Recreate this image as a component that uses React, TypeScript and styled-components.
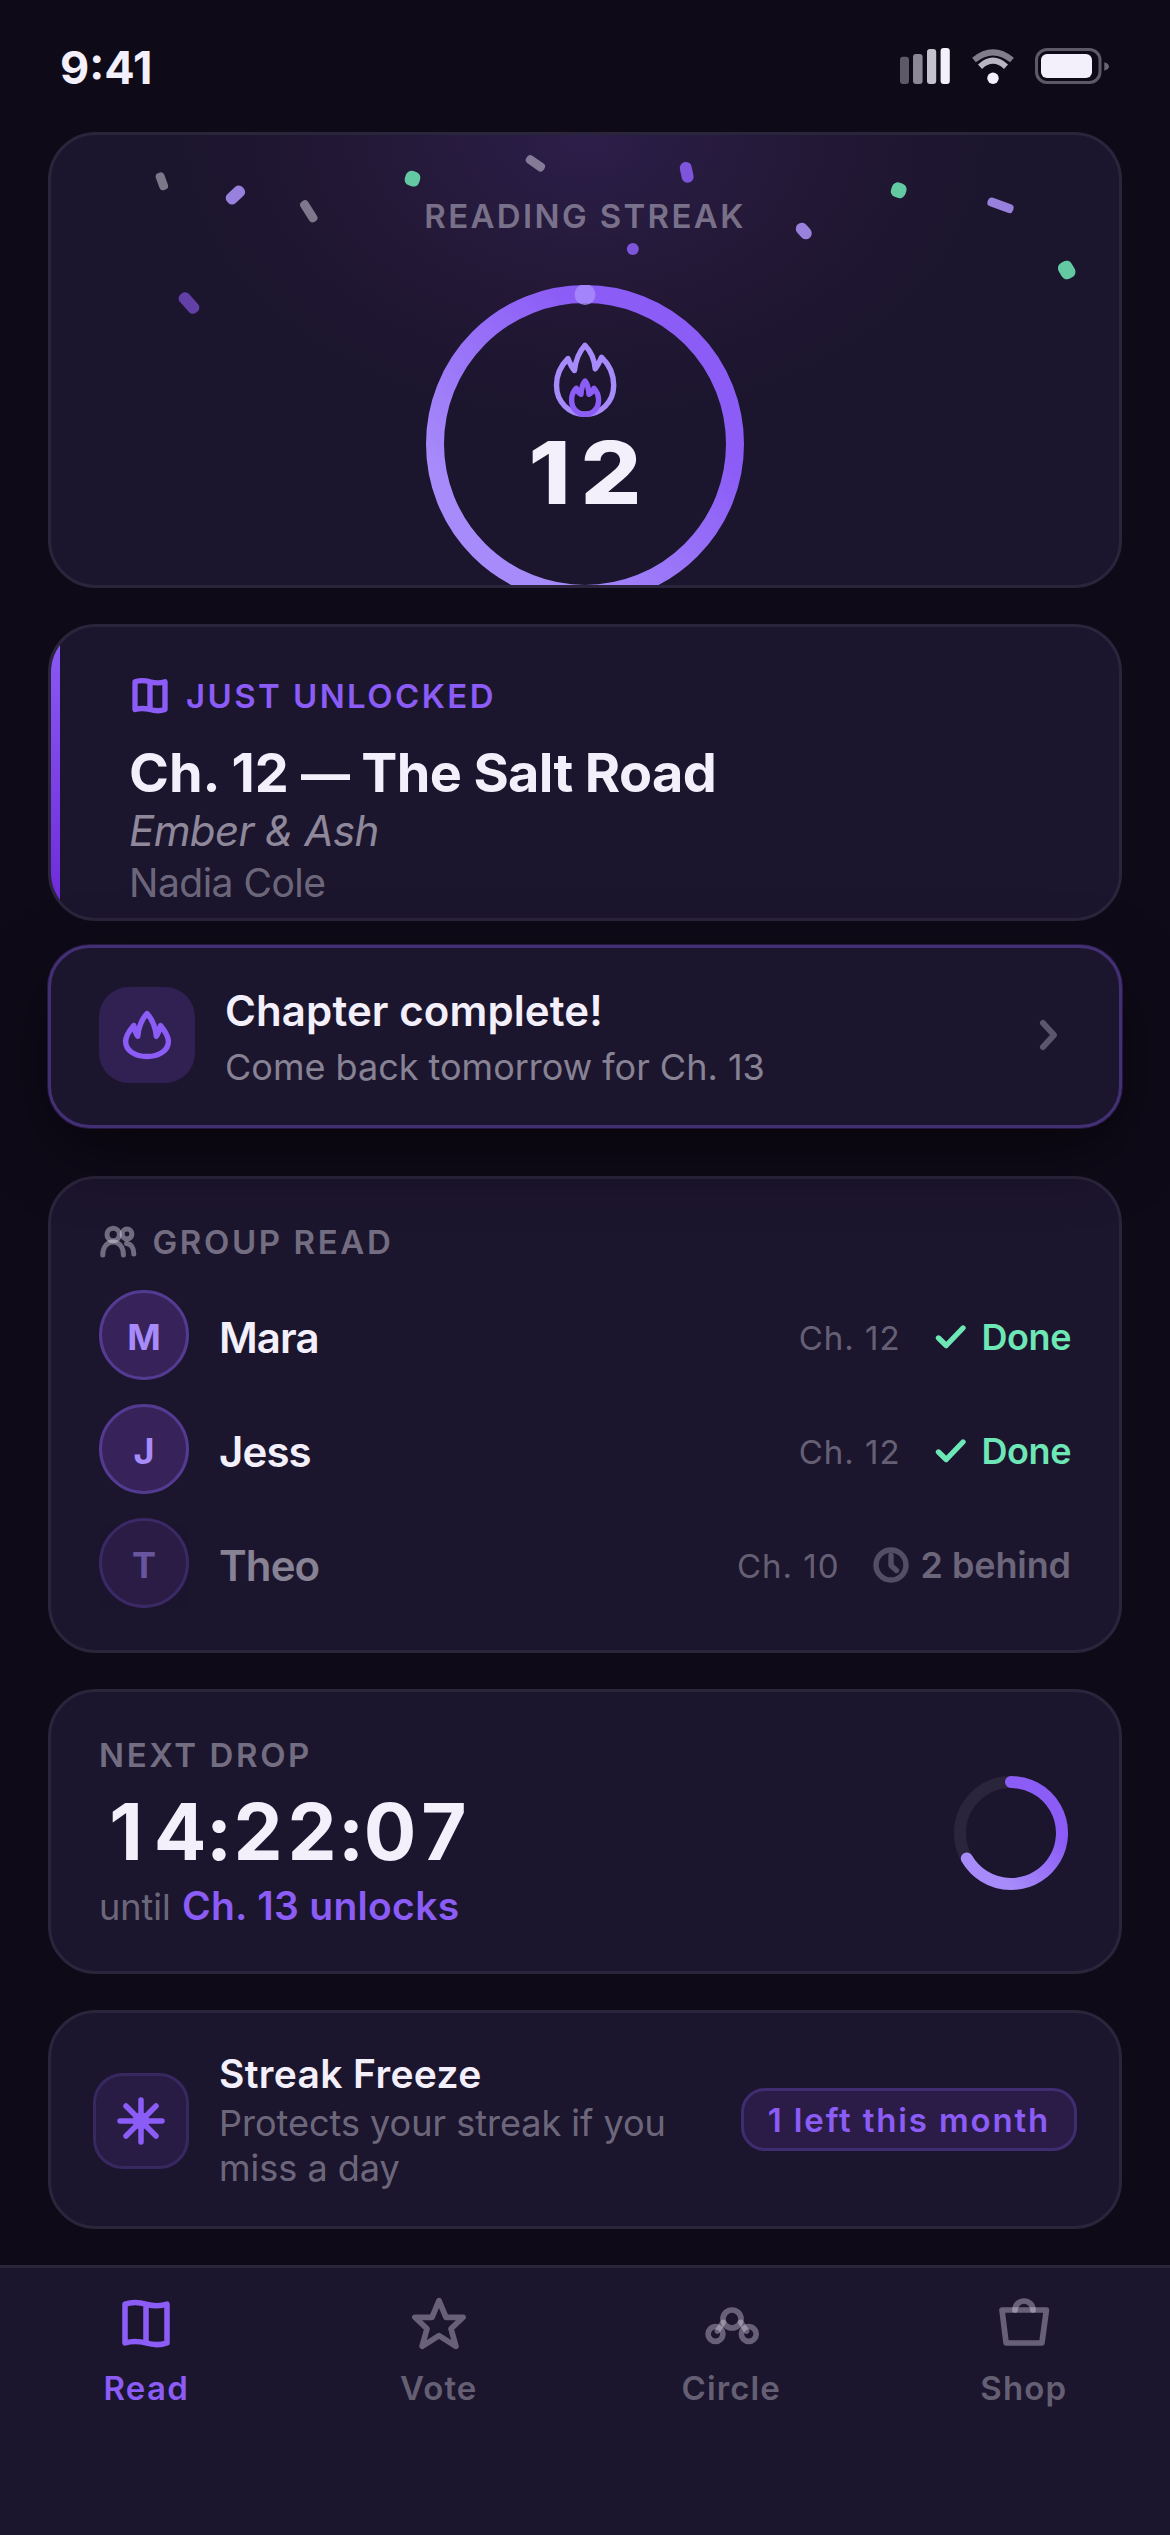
import React from "react";
import styled, { createGlobalStyle } from "styled-components";

const c = {
  page: "#0f0a18",
  card: "#1c152e",
  line: "#2b253c",
  text: "#f3effb",
  violet: "#8b5cf6",
  lilac: "#a78bfa",
  mint: "#6ee7b7",
  mute: (a: number) => `rgba(243, 239, 251, ${a})`,
};

const Global = createGlobalStyle`
  * { box-sizing: border-box; }
  html, body { margin: 0; padding: 0; background: ${c.page}; }
  body {
    font-family: Inter, "Liberation Sans", sans-serif;
    color: ${c.text};
    -webkit-font-smoothing: antialiased;
  }
  svg { display: block; flex: none; }
`;

const Screen = styled.div`
  width: 1170px;
  height: 2535px;
  display: flex;
  flex-direction: column;
  background: ${c.page};
  overflow: hidden;
`;

const StatusBar = styled.header`
  height: 132px;
  padding: 0 61px 0 60px;
  display: flex;
  justify-content: space-between;
  align-items: center;
`;

const Clock = styled.div`
  font-size: 45px;
  line-height: 54px;
  font-weight: 700;
  padding-top: 4px;
`;

const Feed = styled.main`
  flex: 1;
  padding: 0 48px;
  display: flex;
  flex-direction: column;
`;

const Card = styled.section<{ $h: number; $mt?: number }>`
  position: relative;
  flex: none;
  height: ${(p) => p.$h}px;
  margin-top: ${(p) => p.$mt ?? 0}px;
  background: ${c.card};
  border: 3px solid ${c.line};
  border-radius: 48px;
  overflow: hidden;
`;

const StreakCard = styled(Card)`
  display: flex;
  flex-direction: column;
  align-items: center;
  padding-top: 61px;
  background: radial-gradient(ellipse 400px 280px at 50% 0%, #2c1e4a 0%, #241938 50%, ${c.card} 100%);
`;

const ConfettiLayer = styled.svg`
  position: absolute;
  left: 0;
  top: 0;
`;

const Label = styled.div<{ $tone?: string; $ls?: number }>`
  position: relative;
  display: flex;
  align-items: center;
  font-size: 33px;
  line-height: 40px;
  font-weight: 600;
  letter-spacing: ${(p) => p.$ls ?? 2.35}px;
  text-transform: uppercase;
  color: ${(p) => p.$tone ?? c.mute(0.42)};
`;

const RingStack = styled.div`
  display: grid;
  justify-items: center;
  margin-top: 49px;
  > * { grid-area: 1 / 1; }
`;

const RingContent = styled.div`
  display: flex;
  flex-direction: column;
  align-items: center;
  padding-top: 57px;
`;

const StreakCount = styled.div`
  margin-top: 11px;
  margin-right: -10px;
  font-size: 87px;
  line-height: 90px;
  font-weight: 800;
  letter-spacing: 9px;
  transform: scaleX(1.1);
`;

const ChapterCard = styled(Card)`
  display: flex;
  padding-top: 48px;
  &::before {
    content: "";
    position: absolute;
    left: 0;
    top: 0;
    bottom: 0;
    width: 9px;
    background: linear-gradient(180deg, ${c.violet}, #6d28d9);
  }
`;

const ChapterBody = styled.div`
  padding-left: 78px;
`;

const LabelIcon = styled.span<{ $gap: number }>`
  margin-right: ${(p) => p.$gap}px;
`;

const ChapterTitle = styled.h1`
  margin: 23px 0 0;
  font-size: 54px;
  line-height: 66px;
  font-weight: 700;
  letter-spacing: -0.65px;
`;

const ChapterNumber = styled.span`
  letter-spacing: -0.05px;
`;

const Dash = styled.span`
  font-size: 49px;
  line-height: 1;
`;

const BookName = styled.div`
  font-size: 42px;
  line-height: 50px;
  font-style: italic;
  letter-spacing: -0.6px;
  color: ${c.mute(0.55)};
`;

const Author = styled.div`
  margin-top: 2px;
  font-size: 39px;
  line-height: 50px;
  letter-spacing: -0.5px;
  color: ${c.mute(0.4)};
`;

const Toast = styled.section`
  position: relative;
  z-index: 2;
  flex: none;
  height: 183px;
  margin-top: 24px;
  padding: 0 55px 3px 48px;
  display: flex;
  align-items: center;
  background: ${c.card};
  border: 3px solid #432f74;
  border-radius: 42px;
  box-shadow: 0 0 0 1px rgba(139, 92, 246, 0.2), 0 24px 72px rgba(0, 0, 0, 0.45);
`;

const Tile = styled.div<{ $outlined?: boolean }>`
  width: 96px;
  height: 96px;
  flex: none;
  display: flex;
  align-items: center;
  justify-content: center;
  margin-right: 30px;
  border-radius: 30px;
  background: ${(p) => (p.$outlined ? "#281c45" : "#302152")};
  border: ${(p) => (p.$outlined ? "3px solid #382860" : "none")};
`;

const Grow = styled.div`
  flex: 1;
  min-width: 0;
`;

const ToastText = styled(Grow)`
  padding-top: 4px;
`;

const ToastTitle = styled.div`
  font-size: 42px;
  line-height: 51px;
  font-weight: 600;
  letter-spacing: 0.1px;
`;

const ToastSub = styled.div`
  margin-top: 9px;
  font-size: 36px;
  line-height: 45px;
  color: ${c.mute(0.5)};
`;

const GroupCard = styled(Card)`
  padding: 43px 48px 0;
`;

const Members = styled.div`
  display: flex;
  flex-direction: column;
  gap: 24px;
  margin-top: 28px;
`;

const Member = styled.div`
  display: flex;
  align-items: center;
  height: 90px;
`;

const Avatar = styled.div<{ $dim?: boolean }>`
  width: 90px;
  height: 90px;
  border-radius: 50%;
  border: 3px solid #543b92;
  background: #372359;
  color: ${c.lilac};
  display: flex;
  align-items: center;
  justify-content: center;
  padding-top: 4px;
  font-size: 36px;
  font-weight: 700;
  opacity: ${(p) => (p.$dim ? 0.55 : 1)};
`;

const MemberName = styled.div<{ $dim?: boolean }>`
  flex: 1;
  padding: 5px 0 0 30px;
  font-size: 42px;
  font-weight: 560;
  letter-spacing: -0.9px;
  color: ${(p) => (p.$dim ? c.mute(0.5) : c.text)};
`;

const MemberChapter = styled.div`
  padding-top: 5px;
  font-size: 33px;
  color: ${c.mute(0.36)};
  letter-spacing: 0.99px;
`;

const MemberStatus = styled.div<{ $done?: boolean }>`
  display: flex;
  align-items: center;
  padding-top: 4px;
  margin-left: 33px;
  gap: 12px;
  font-size: 36px;
  font-weight: 600;
  letter-spacing: ${(p) => (p.$done ? -0.45 : -0.1)}px;
  color: ${(p) => (p.$done ? c.mint : c.mute(0.38))};
`;

const DropCard = styled(Card)`
  display: flex;
  padding: 43px 51px 0 48px;
`;

const Countdown = styled.div`
  display: flex;
  margin-top: 12px;
  font-size: 78px;
  line-height: 90px;
  font-weight: 700;
`;

const Digit = styled.span<{ $sep?: boolean }>`
  display: flex;
  justify-content: center;
  width: ${(p) => (p.$sep ? 24 : 54)}px;
`;

const Until = styled.div`
  margin-top: 5px;
  font-size: 36px;
  line-height: 48px;
  color: ${c.mute(0.4)};
  strong {
    margin-left: 1px;
    font-size: 39px;
    font-weight: 600;
    letter-spacing: 0.3px;
    color: ${c.violet};
  }
`;

const DropRing = styled.div`
  padding-top: 41px;
`;

const FreezeCard = styled(Card)`
  display: flex;
  align-items: center;
  padding: 3px 42px 0;
`;

const FreezeText = styled(Grow)`
  padding-bottom: 1px;
`;

const FreezeTitle = styled.div`
  font-size: 39px;
  line-height: 48px;
  font-weight: 600;
  letter-spacing: 0.35px;
`;

const FreezeSub = styled.div`
  margin-top: 3px;
  width: 480px;
  font-size: 36px;
  line-height: 45px;
  color: ${c.mute(0.4)};
`;

const Pill = styled.div`
  flex: none;
  width: 336px;
  height: 63px;
  margin-bottom: 3px;
  display: flex;
  align-items: center;
  justify-content: center;
  border: 3px solid #402c70;
  border-radius: 24px;
  background: #2b1c47;
  color: ${c.violet};
  font-size: 33px;
  font-weight: 600;
  letter-spacing: 1.85px;
  white-space: nowrap;
`;

const TabBar = styled.nav`
  height: 270px;
  flex: none;
  border-top: 3px solid ${c.line};
  background: ${c.card};
  display: grid;
  grid-template-columns: repeat(4, 1fr);
  padding-top: 20px;
`;

const Tab = styled.div<{ $active?: boolean }>`
  display: flex;
  flex-direction: column;
  align-items: center;
  gap: 8px;
  font-size: 33px;
  line-height: 40px;
  font-weight: 600;
  letter-spacing: ${(p) => (p.$active ? 1.3 : 1.1)}px;
  color: ${(p) => (p.$active ? c.violet : c.mute(0.35))};
`;

type Piece = { x: number; y: number; w: number; h: number; r: number; rx: number; fill: string };
const gray = "rgba(243,239,251,.45)";
const lav = "#9880dd";
const green = "#62c9a2";
const pieces: Piece[] = [
  { x: 161.9, y: 181.3, w: 9, h: 18, r: -20, rx: 4, fill: gray },
  { x: 235.4, y: 195, w: 12, h: 21, r: 47, rx: 5, fill: lav },
  { x: 308.8, y: 211.3, w: 9, h: 24, r: -32, rx: 4, fill: gray },
  { x: 412.5, y: 178.7, w: 15, h: 15, r: 18, rx: 6, fill: green },
  { x: 535.4, y: 163.3, w: 9, h: 21, r: -55, rx: 4, fill: gray },
  { x: 189, y: 303, w: 12, h: 24, r: -42, rx: 5, fill: "#6240a8" },
  { x: 686.7, y: 172.3, w: 12, h: 21, r: -12, rx: 6, fill: "#7c55dc" },
  { x: 632.8, y: 249, w: 12, h: 12, r: 0, rx: 6, fill: "#7c55dc" },
  { x: 803.8, y: 231, w: 12, h: 18, r: -42, rx: 6, fill: lav },
  { x: 898.7, y: 190.3, w: 15, h: 15, r: 20, rx: 6, fill: green },
  { x: 1000.5, y: 205.3, w: 27, h: 9, r: 20, rx: 4, fill: lav },
  { x: 1066.7, y: 270, w: 15, h: 18, r: -30, rx: 6, fill: green },
];

const Confetti = () => (
  <ConfettiLayer width="1068" height="450" viewBox="51 135 1068 450">
    {pieces.map((p, i) => (
      <rect
        key={i}
        x={p.x - p.w / 2}
        y={p.y - p.h / 2}
        width={p.w}
        height={p.h}
        rx={p.rx}
        fill={p.fill}
        transform={`rotate(${p.r} ${p.x} ${p.y})`}
      />
    ))}
  </ConfettiLayer>
);

const StatusIcons = () => (
  <svg width="210" height="42" viewBox="899 45 210 42">
    <rect x="900" y="56.700" width="9" height="27.300" rx="3" fill={c.mute(0.35)} />
    <rect x="913" y="54" width="9.600" height="30" rx="3" fill={c.mute(0.55)} />
    <rect x="927" y="49" width="9.200" height="35" rx="3" fill={c.mute(0.8)} />
    <rect x="940.600" y="48" width="9.200" height="36" rx="3" fill={c.text} />
    <g fill="none" strokeWidth="6">
      <path d="M974 60 Q993 44.600 1012 60" stroke={c.mute(0.5)} />
      <path d="M980 66.700 Q993 54.700 1006 66.700" stroke={c.mute(0.75)} />
    </g>
    <circle cx="993" cy="78.200" r="5.700" fill={c.text} />
    <rect x="1036.500" y="49.500" width="63.500" height="33" rx="10.500" fill="none" stroke={c.mute(0.35)} strokeWidth="3" />
    <rect x="1041" y="54" width="51" height="24" rx="6" fill={c.text} />
    <path d="M1104.300 62.300 q4.700 1.500 4.700 4.200 t-4.700 4.200z" fill={c.mute(0.4)} />
  </svg>
);

const Book = ({ size, span, stroke }: { size: number; span: number; stroke: number }) => (
  <svg
    width={size}
    height={size}
    viewBox={`${-span / 2} ${-span / 2} ${span} ${span}`}
    fill="none"
    stroke={c.violet}
    strokeWidth={stroke}
    strokeLinejoin="round"
    strokeLinecap="round"
  >
    <path d="M-7 -6.600 C-5 -7.300 -2.300 -7.300 0 -6.600 C2.300 -6 5 -6 7 -6.600 V6.300 C5 7 2.300 7 0 6.300 C-2.300 5.700 -5 5.700 -7 6.300 Z M0 -6.600 V6.300" />
  </svg>
);

const BigRing = () => (
  <svg width="320" height="300" viewBox="425 285 320 300" fill="none">
    <defs>
      <linearGradient id="ring" x1="0.2" y1="0.8" x2="0.72" y2="0.28">
        <stop offset="0" stopColor={c.lilac} />
        <stop offset="1" stopColor={c.violet} />
      </linearGradient>
    </defs>
    <circle cx="585" cy="444" r="150" stroke="url(#ring)" strokeWidth="18" />
    <circle cx="585" cy="294.500" r="10.500" fill={c.lilac} fillOpacity="0.85" />
  </svg>
);

const StreakFlame = () => (
  <svg width="66" height="75" viewBox="552 342 66 75" fill="none" strokeWidth="5.400" strokeLinejoin="round" strokeLinecap="round">
    <path
      stroke={c.lilac}
      d="M585 345.300 C579 352 575.500 361 574.500 370.500 C572 368 569.500 362.500 568 358.500 C560.500 366 556.500 375 556.500 385.300 C556.500 402 569 414.300 585 414.300 C601 414.300 613.700 402 613.700 385.300 C613.700 374 608.500 364 601.500 357.300 C600 361 597.500 366 595.200 368.800 C594.500 360 591 351.500 585 345.300 Z"
    />
    <path
      stroke={c.violet}
      d="M585 381 C582.500 384 581.300 389 581 394.300 C578.500 393 577 390.500 576.300 388.300 C573 391.500 571.600 396 571.600 400 C571.600 408.500 577.500 414.300 585 414.300 C592.500 414.300 598.600 408.500 598.600 400 C598.600 396 597 391.500 594 388.300 C593 390.500 591.500 393 589 394.300 C588.700 389 587.500 384 585 381 Z"
    />
  </svg>
);

const SmallFlame = () => (
  <svg width="54" height="54" viewBox="120 1008 54 54" fill="none" stroke={c.violet} strokeWidth="5.400" strokeLinejoin="round" strokeLinecap="round">
    <path d="M147 1013.500 C141.500 1019.500 138.500 1028 137.800 1036.300 C135.800 1033.500 134.500 1029.500 133.800 1025.500 C129 1031 125.600 1036.500 125.600 1041.500 C125.600 1050.500 135 1056.500 147 1056.500 C159 1056.500 168.400 1050.500 168.400 1041.500 C168.400 1036.500 165 1031 160.500 1025.500 C159.500 1029.500 158.300 1033.500 156.300 1036.300 C155.500 1028 152.500 1019.500 147 1013.500 Z" />
  </svg>
);

const People = () => (
  <svg width="38" height="36" viewBox="100 1223.500 38 36" fill="none" stroke={c.mute(0.4)} strokeWidth="5" strokeLinecap="round">
    <circle cx="114.200" cy="1234" r="6.200" />
    <circle cx="128" cy="1233.500" r="4.900" />
    <path d="M103.800 1254.500 C103.800 1237 124.400 1237 124.400 1254.500" />
    <path d="M127.500 1243 C132.500 1243.500 134.800 1248 134.800 1253.500" />
  </svg>
);

const Check = () => (
  <svg width="36" height="36" viewBox="-2 -6 36 36" fill="none" stroke={c.mint} strokeWidth="5.400" strokeLinecap="round" strokeLinejoin="round">
    <path d="M2.500 13 L10.200 20.500 L27 3" />
  </svg>
);

const ClockIcon = () => (
  <svg width="36" height="36" viewBox="0 0 36 36" fill="none" stroke="#544e65" strokeWidth="5.400" strokeLinecap="round" strokeLinejoin="round">
    <circle cx="18" cy="18" r="15" />
    <path d="M18 8.500 V18.500 L23.500 23.500" />
  </svg>
);

const CountdownRing = () => (
  <svg width="114" height="114" viewBox="0 0 114 114" fill="none">
    <defs>
      <linearGradient id="drop" gradientUnits="userSpaceOnUse" x1="30" y1="84" x2="80" y2="34">
        <stop offset="0" stopColor={c.lilac} />
        <stop offset="1" stopColor={c.violet} />
      </linearGradient>
    </defs>
    <circle cx="57" cy="57" r="51" stroke={c.line} strokeWidth="12" />
    <path d="M57 6 A51 51 0 1 1 12.830 82.500" stroke="url(#drop)" strokeWidth="12" strokeLinecap="round" />
  </svg>
);

const Snow = () => (
  <svg width="48" height="48" viewBox="-24 -24 48 48" fill="none" stroke={c.violet} strokeWidth="5.500" strokeLinecap="round">
    <path d="M0 -21 V21 M-21 0 H21 M-15 -15 L15 15 M15 -15 L-15 15" />
    <circle r="8.500" fill={c.violet} stroke="none" />
  </svg>
);

const navStroke = { fill: "none", stroke: c.mute(0.35), strokeWidth: 5.7, strokeLinecap: "round", strokeLinejoin: "round" } as const;

const Star = () => (
  <svg width="72" height="72" viewBox="-36 38 72 72" {...navStroke}>
    <path d="M0 50.700 L7 67.300 L24.100 67.300 L12 78.700 L16.900 96.300 L0 85.700 L-16.900 96.300 L-12 78.700 L-24.100 67.300 L-7 67.300 Z" />
  </svg>
);

const Circles = () => (
  <svg width="72" height="72" viewBox="-37 38 72 72" {...navStroke}>
    <circle cx="0" cy="69" r="9" />
    <circle cx="-16.500" cy="84" r="7.400" />
    <circle cx="16.800" cy="84" r="7.400" />
    <path d="M-9 72.500 L-14.500 81" />
    <path d="M9 72.500 L14.500 81" />
  </svg>
);

const Bag = () => (
  <svg width="72" height="72" viewBox="-36 38 72 72" {...navStroke}>
    <path d="M-22 60 H22.400 L17.900 93 H-17.900 Z" />
    <path d="M-9 60 A9 9 0 0 1 9 60" />
  </svg>
);

const members = [
  { name: "Mara", chapter: "Ch. 12", done: true },
  { name: "Jess", chapter: "Ch. 12", done: true },
  { name: "Theo", chapter: "Ch. 10", done: false },
];

export default function App() {
  return (
    <>
      <Global />
      <Screen>
        <StatusBar>
          <Clock>9:41</Clock>
          <StatusIcons />
        </StatusBar>
        <Feed>
          <StreakCard $h={456}>
            <Confetti />
            <Label>Reading streak</Label>
            <RingStack>
              <BigRing />
              <RingContent>
                <StreakFlame />
                <StreakCount>12</StreakCount>
              </RingContent>
            </RingStack>
          </StreakCard>

          <ChapterCard $h={297} $mt={36}>
            <ChapterBody>
              <Label $tone={c.violet} $ls={2.4}>
                <LabelIcon $gap={15}>
                  <Book size={42} span={19.6} stroke={2.5} />
                </LabelIcon>
                Just unlocked
              </Label>
              <ChapterTitle>
                <ChapterNumber>Ch. 12</ChapterNumber> <Dash>—</Dash> The Salt Road
              </ChapterTitle>
              <BookName>Ember &amp; Ash</BookName>
              <Author>Nadia Cole</Author>
            </ChapterBody>
          </ChapterCard>

          <Toast>
            <Tile>
              <SmallFlame />
            </Tile>
            <ToastText>
              <ToastTitle>Chapter complete!</ToastTitle>
              <ToastSub>Come back tomorrow for Ch. 13</ToastSub>
            </ToastText>
            <svg width="30" height="42" viewBox="0 0 30 42" fill="none" stroke={c.mute(0.3)} strokeWidth="6" strokeLinecap="round" strokeLinejoin="round">
              <path d="M9 9 L20 21 L9 33" />
            </svg>
          </Toast>

          <GroupCard $h={477} $mt={48}>
            <Label $ls={2.6}>
              <LabelIcon $gap={15.5}>
                <People />
              </LabelIcon>
              Group read
            </Label>
            <Members>
              {members.map((m) => (
                <Member key={m.name}>
                  <Avatar $dim={!m.done}>{m.name[0]}</Avatar>
                  <MemberName $dim={!m.done}>{m.name}</MemberName>
                  <MemberChapter>{m.chapter}</MemberChapter>
                  <MemberStatus $done={m.done}>
                    {m.done ? <Check /> : <ClockIcon />}
                    {m.done ? "Done" : "2 behind"}
                  </MemberStatus>
                </Member>
              ))}
            </Members>
          </GroupCard>

          <DropCard $h={285} $mt={36}>
            <Grow>
              <Label $ls={2.6}>Next drop</Label>
              <Countdown>
                {"14:22:07".split("").map((ch, i) => (
                  <Digit key={i} $sep={ch === ":"}>
                    {ch}
                  </Digit>
                ))}
              </Countdown>
              <Until>
                until <strong>Ch. 13 unlocks</strong>
              </Until>
            </Grow>
            <DropRing>
              <CountdownRing />
            </DropRing>
          </DropCard>

          <FreezeCard $h={219} $mt={36}>
            <Tile $outlined>
              <Snow />
            </Tile>
            <FreezeText>
              <FreezeTitle>Streak Freeze</FreezeTitle>
              <FreezeSub>Protects your streak if you miss a day</FreezeSub>
            </FreezeText>
            <Pill>1 left this month</Pill>
          </FreezeCard>
        </Feed>
        <TabBar>
          <Tab $active>
            <Book size={72} span={24} stroke={1.85} />
            Read
          </Tab>
          <Tab>
            <Star />
            Vote
          </Tab>
          <Tab>
            <Circles />
            Circle
          </Tab>
          <Tab>
            <Bag />
            Shop
          </Tab>
        </TabBar>
      </Screen>
    </>
  );
}
